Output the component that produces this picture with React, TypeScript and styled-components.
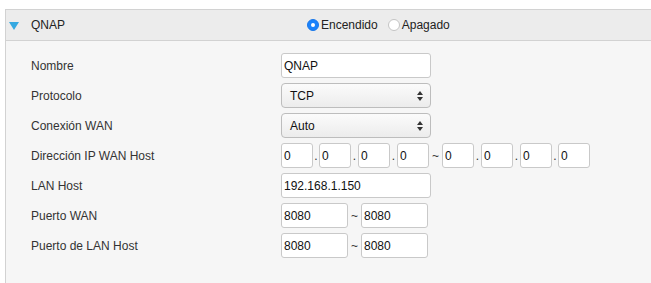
import React from "react";
import styled, { createGlobalStyle } from "styled-components";

const Global = createGlobalStyle`
  html, body { margin: 0; padding: 0; background: #ffffff; }
  body { font-family: "Liberation Sans", Arial, Helvetica, sans-serif; font-size: 12px; color: #333; }
`;

const Panel = styled.section`
  margin: 9px 0 0 5px;
  border-top: 1px solid #d2d2d2;
  border-left: 1px solid #d2d2d2;
  height: 273px;
  display: flex;
  flex-direction: column;
`;

const Header = styled.div`
  height: 30px;
  background: #ececec;
  border-bottom: 1px solid #d2d2d2;
  display: flex;
  align-items: center;
`;

const Title = styled.div`
  width: 301px;
  display: flex;
  align-items: center;
  gap: 12px;
  padding-left: 3px;
  box-sizing: border-box;
  color: #222;
  font-size: 12px;
`;

const Triangle = styled.span`
  width: 0;
  height: 0;
  border-left: 5px solid transparent;
  border-right: 5px solid transparent;
  border-top: 8px solid #36a9e1;
  margin-top: 1px;
`;

const RadioGroup = styled.div`
  display: flex;
  align-items: center;
  gap: 10px;
`;

const RadioLabel = styled.label`
  display: flex;
  align-items: center;
  gap: 2px;
  color: #222;
  font-size: 12px;
`;

const RadioDot = styled.span<{ $on?: boolean }>`
  box-sizing: border-box;
  width: 12px;
  height: 12px;
  border-radius: 50%;
  display: inline-flex;
  align-items: center;
  justify-content: center;
  background: ${(p) => (p.$on ? "#1a82fb" : "#ffffff")};
  border: 1px solid ${(p) => (p.$on ? "#1a78ea" : "#c4c4c4")};
  &::after {
    content: "";
    width: 4px;
    height: 4px;
    border-radius: 50%;
    background: #fff;
    display: ${(p) => (p.$on ? "block" : "none")};
  }
`;

const Body = styled.div`
  flex: 1;
  background: #f6f6f6;
  padding-top: 12px;
  display: flex;
  flex-direction: column;
  gap: 5px;
`;

const Row = styled.div`
  height: 25px;
  display: grid;
  grid-template-columns: 250px 1fr;
  align-items: center;
  padding-left: 25px;
`;

const Label = styled.div`
  color: #333;
  font-size: 12px;
`;

const Field = styled.div`
  display: flex;
  align-items: center;
  height: 25px;
`;

const Input = styled.div<{ $w: number }>`
  box-sizing: border-box;
  width: ${(p) => p.$w}px;
  height: 25px;
  background: #fff;
  border: 1px solid #c9c9c9;
  border-radius: 3px;
  padding-left: 2px;
  display: flex;
  align-items: center;
  color: #111;
  font-size: 12px;
`;

const Select = styled.div`
  box-sizing: border-box;
  width: 150px;
  height: 25px;
  border: 1px solid #bdbdbd;
  border-radius: 4px;
  background: linear-gradient(#fbfbfb, #ececec);
  padding: 0 7px 0 8px;
  display: flex;
  align-items: center;
  justify-content: space-between;
  color: #111;
  font-size: 12px;
`;

const Sep = styled.span<{ $w: number; $low?: boolean }>`
  width: ${(p) => p.$w}px;
  text-align: center;
  color: #333;
  font-size: 12px;
  align-self: ${(p) => (p.$low ? "flex-end" : "center")};
  padding-bottom: ${(p) => (p.$low ? "5px" : "0")};
`;

const Arrows = () => (
  <svg width="6" height="10" viewBox="0 0 6 10">
    <path d="M3 0 L6 4 L0 4 Z" fill="#333" />
    <path d="M3 10 L6 6 L0 6 Z" fill="#333" />
  </svg>
);

const IpBox = ({ v }: { v: string }) => <Input $w={32}>{v}</Input>;

export default function App() {
  return (
    <>
      <Global />
      <Panel>
        <Header>
          <Title>
            <Triangle />
            <span>QNAP</span>
          </Title>
          <RadioGroup>
            <RadioLabel>
              <RadioDot $on />
              Encendido
            </RadioLabel>
            <RadioLabel>
              <RadioDot />
              Apagado
            </RadioLabel>
          </RadioGroup>
        </Header>
        <Body>
          <Row>
            <Label>Nombre</Label>
            <Field>
              <Input $w={150}>QNAP</Input>
            </Field>
          </Row>
          <Row>
            <Label>Protocolo</Label>
            <Field>
              <Select>
                <span>TCP</span>
                <Arrows />
              </Select>
            </Field>
          </Row>
          <Row>
            <Label>Conexión WAN</Label>
            <Field>
              <Select>
                <span>Auto</span>
                <Arrows />
              </Select>
            </Field>
          </Row>
          <Row>
            <Label>Dirección IP WAN Host</Label>
            <Field>
              <IpBox v="0" />
              <Sep $w={6} $low>.</Sep>
              <IpBox v="0" />
              <Sep $w={7} $low>.</Sep>
              <IpBox v="0" />
              <Sep $w={7} $low>.</Sep>
              <IpBox v="0" />
              <Sep $w={13}>~</Sep>
              <IpBox v="0" />
              <Sep $w={7} $low>.</Sep>
              <IpBox v="0" />
              <Sep $w={7} $low>.</Sep>
              <IpBox v="0" />
              <Sep $w={6} $low>.</Sep>
              <IpBox v="0" />
            </Field>
          </Row>
          <Row>
            <Label>LAN Host</Label>
            <Field>
              <Input $w={150}>192.168.1.150</Input>
            </Field>
          </Row>
          <Row>
            <Label>Puerto WAN</Label>
            <Field>
              <Input $w={67}>8080</Input>
              <Sep $w={13}>~</Sep>
              <Input $w={67}>8080</Input>
            </Field>
          </Row>
          <Row>
            <Label>Puerto de LAN Host</Label>
            <Field>
              <Input $w={67}>8080</Input>
              <Sep $w={13}>~</Sep>
              <Input $w={67}>8080</Input>
            </Field>
          </Row>
        </Body>
      </Panel>
    </>
  );
}
